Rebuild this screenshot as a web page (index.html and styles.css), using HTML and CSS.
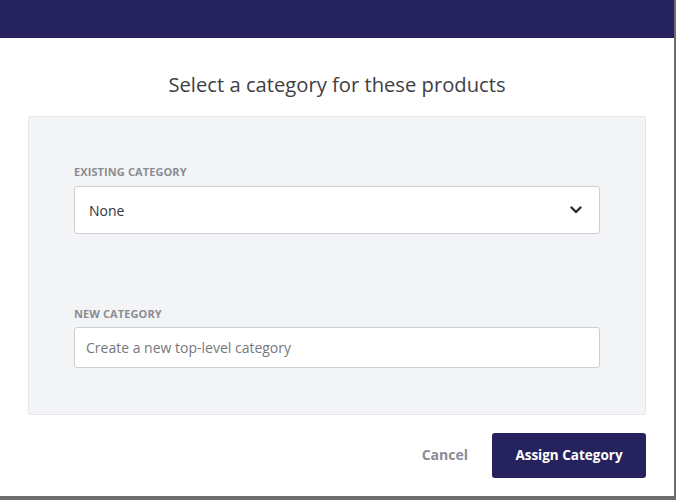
FILE: index.html
```html
<!DOCTYPE html>
<html>
<head>
<meta charset="utf-8">
<link rel="stylesheet" href="styles.css">
</head>
<body>
<div class="modal">
  <div class="topbar"></div>
  <h1 class="title">Select a category for these products</h1>
  <div class="panel">
    <div class="field">
      <label class="label">Existing category</label>
      <div class="select">
        <span>None</span>
        <svg class="chev" width="12" height="8" viewBox="0 0 12 8"><polyline points="1.5,1.5 6,6 10.5,1.5" fill="none" stroke="#2b2b33" stroke-width="2.4" stroke-linecap="round" stroke-linejoin="round"/></svg>
      </div>
    </div>
    <div class="field second">
      <label class="label">New category</label>
      <div class="input">Create a new top-level category</div>
    </div>
  </div>
  <div class="footer">
    <span class="cancel">Cancel</span>
    <span class="assign">Assign Category</span>
  </div>
</div>
</body>
</html>
```
FILE: styles.css
```css
html, body {
  margin: 0;
  padding: 0;
}
body {
  background: #6c6c6c;
  width: 676px;
  height: 500px;
  overflow: hidden;
  font-family: "Open Sans", "Liberation Sans", sans-serif;
}
.modal {
  width: 674px;
  height: 496px;
  background: #fff;
  display: flex;
  flex-direction: column;
}
.topbar {
  height: 38px;
  background: #26225e;
  flex: none;
}
.title {
  margin: 32px 0 0;
  font-size: 20.2px;
  line-height: 28px;
  font-weight: 400;
  color: #3e3e44;
  text-align: center;
}
.panel {
  margin: 18px 28px 0;
  background: #f3f4f6;
  border: 1px solid #e6e7ea;
  border-radius: 2px;
  padding: 47px 45px 46px;
}
.field.second {
  margin-top: 72px;
}
.label {
  display: block;
  font-size: 11px;
  line-height: 16px;
  font-weight: 700;
  text-transform: uppercase;
  color: #8a8c93;
  letter-spacing: 0.1px;
  margin-bottom: 6px;
}
.field.second .label {
  margin-bottom: 5px;
}
.select {
  height: 46px;
  background: #fff;
  border: 1px solid #cfd0d3;
  border-radius: 3px;
  display: flex;
  align-items: center;
  justify-content: space-between;
  padding: 0 17px 0 14px;
  font-size: 14px;
  color: #333338;
}
.chev {
  margin-top: 0;
}
.input {
  height: 39px;
  background: #fff;
  border: 1px solid #cfd0d3;
  border-radius: 3px;
  display: flex;
  align-items: center;
  padding: 0 11px;
  font-size: 14px;
  color: #77777c;
}
.footer {
  display: flex;
  justify-content: flex-end;
  align-items: center;
  margin: 18px 28px 0;
  gap: 24px;
}
.cancel {
  font-size: 14px;
  font-weight: 700;
  color: #8a8c93;
  margin-top: -2px;
}
.assign {
  background: #26225e;
  color: #fff;
  font-size: 13.5px;
  font-weight: 700;
  height: 45px;
  width: 154px;
  border-radius: 3px;
  display: flex;
  align-items: center;
  justify-content: center;
  padding-bottom: 2px;
  box-sizing: border-box;
}
```
